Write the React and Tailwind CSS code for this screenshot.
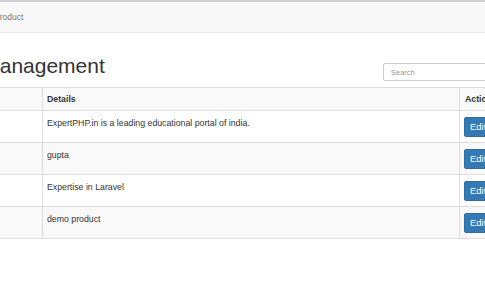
import React from "react";

const products = [
  { id: 1, name: "ExpertPHP", detail: "ExpertPHP.in is a leading educational portal of india." },
  { id: 2, name: "ajay", detail: "gupta" },
  { id: 3, name: "Laravel", detail: "Expertise in Laravel" },
  { id: 4, name: "demo", detail: "demo product" },
];

export default function App() {
  return (
    <div className="h-[291px] w-[485px] overflow-hidden bg-white text-[#333] font-['Liberation_Sans',Arial,sans-serif]">
      <nav className="flex h-[33px] items-center border-t-2 border-b border-t-[#cfcfcf] border-b-[#e7e7e7] bg-[#f8f8f8]">
        <span className="-ml-[6px] text-[8.5px] text-[#777]">Product</span>
      </nav>

      <div className="mt-[21px] flex items-start">
        <h1 className="-ml-[96px] whitespace-nowrap text-[21px] leading-[1.1] font-normal">Product Management</h1>
        <input
          className="ml-auto -mr-[120px] mt-[9px] h-[18px] w-[222px] rounded-[2px] border border-[#ccc] bg-white px-[7px] text-[7.5px] placeholder:text-[#999] outline-none"
          placeholder="Search"
        />
      </div>

      <table className="mt-[6px] -ml-[60px] w-[620px] table-fixed border-collapse text-[8.75px] leading-[1.43]">
        <colgroup>
          <col className="w-[102px]" />
          <col className="w-[417px]" />
          <col />
        </colgroup>
        <thead>
          <tr className="bg-[#f9f9f9]">
            <th className="h-[23px] border border-[#ddd] px-[5px] text-left font-bold">No</th>
            <th className="h-[23px] border border-[#ddd] px-[4px] text-left font-bold">Details</th>
            <th className="h-[23px] border border-[#ddd] px-[5px] text-left font-bold">Action</th>
          </tr>
        </thead>
        <tbody>
          {products.map((p, i) => (
            <tr key={p.id} className={i % 2 === 1 ? "bg-[#f9f9f9]" : "bg-white"}>
              <td className="h-[32px] border border-[#ddd] px-[5px] pt-[6px] align-top">{p.id}</td>
              <td className="h-[32px] border border-[#ddd] px-[4px] pt-[6px] align-top">{p.detail}</td>
              <td className="h-[32px] border border-[#ddd] px-[4px] pt-[6px] align-top">
                <div className="flex gap-[3px]">
                  <button className="h-[20px] rounded-[2px] border border-[#2e6da4] bg-[#337ab7] px-[5px] text-[9.5px] text-white">
                    Edit
                  </button>
                  <button className="h-[20px] rounded-[2px] border border-[#d43f3a] bg-[#d9534f] px-[5px] text-[9.5px] text-white">
                    Delete
                  </button>
                </div>
              </td>
            </tr>
          ))}
        </tbody>
      </table>
    </div>
  );
}
